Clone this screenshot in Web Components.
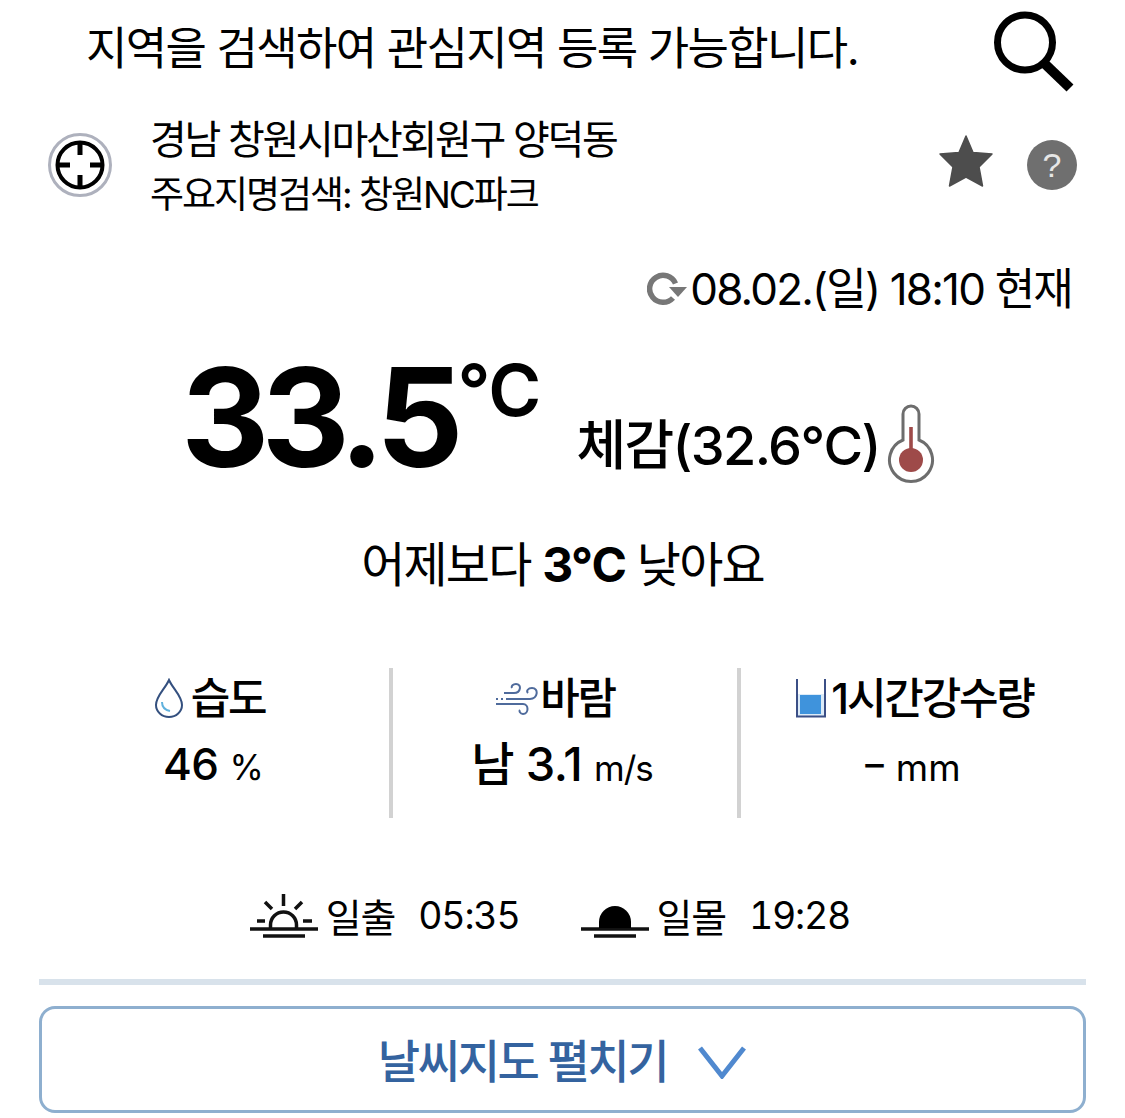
<!DOCTYPE html>
<html lang="ko">
<head>
<meta charset="utf-8">
<title>날씨</title>
<style>
  html, body { margin: 0; padding: 0; background: #fff; }
  body { font-family: Inter, "Noto Sans CJK KR", "Noto Sans", sans-serif; color: #000; width: 1125px; height: 1118px; overflow: hidden; }
</style>
</head>
<body>
<search-bar>지역을 검색하여 관심지역 등록 가능합니다.</search-bar>
<location-row></location-row>
<current-weather></current-weather>
<stat-row></stat-row>
<sun-times></sun-times>
<map-toggle>날씨지도 펼치기</map-toggle>

<script>
// search bar on top
class SearchBar extends HTMLElement {
    constructor() {
        super();
        this.attachShadow({ mode: 'open' });
        this.shadowRoot.innerHTML = `
            <style>
                :host { display: flex; align-items: center; justify-content: space-between; height: 100px; padding: 0 51px 0 86px; }
                .label { font-size: 45px; letter-spacing: -1.6px; line-height: 1; position: relative; top: -2px; }
                svg { width: 84px; height: 84px; display: block; }
            </style>
            <span class="label"><slot></slot></span>
            <svg viewBox="0 0 84 84" fill="none" stroke="#000">
                <circle cx="35" cy="34.5" r="27.5" stroke-width="7"/>
                <path d="M55 56 L80 80" stroke-width="10"/>
            </svg>
        `;
    }
}

class LocationRow extends HTMLElement {
    constructor() {
        super();
        this.attachShadow({ mode: 'open' });
        this.shadowRoot.innerHTML = `
            <style>
                :host { display: flex; align-items: center; height: 130px; padding: 0 48px; }
                .gps { width: 64px; height: 64px; flex: none; }
                .names { margin-left: 38px; padding-top: 4px; flex: 1; display: flex; flex-direction: column; gap: 11px; font-size: 40px; letter-spacing: -2.3px; line-height: 44px; }
                .sub { font-size: 37px; letter-spacing: -2.05px; }
                .star { width: 56px; height: 56px; margin-bottom: 8px; }
                .help { width: 50px; height: 50px; border-radius: 50%; background: #6f6f6f; color: #e6e6e6; margin-left: 33px; display: flex; align-items: center; justify-content: center; font: 34px "Liberation Sans", sans-serif; }
            </style>
            <svg class="gps" viewBox="0 0 64 64" fill="none">
                <circle cx="32" cy="32" r="30.5" stroke="#aeb1bd" stroke-width="3"/>
                <circle cx="32" cy="32" r="22.5" stroke="#000" stroke-width="4"/>
                <path d="M32 9V22M32 42V55M9 32H22M42 32H55" stroke="#000" stroke-width="5"/>
            </svg>
            <div class="names">
                <div>경남 창원시마산회원구 양덕동</div>
                <div class="sub">주요지명검색: 창원NC파크</div>
            </div>
            <svg class="star" viewBox="0 0 56 56"><path fill="#4d4d4d" stroke="#4d4d4d" stroke-width="1.5" stroke-linejoin="round" d="M28 3 L35 19.5 L54 21 L41 34 L44.5 53 L28 44 L11.5 53 L15 34 L2 21 L21 19.5Z"/></svg>
            <div class="help">?</div>
        `;
    }
}

class CurrentWeather extends HTMLElement {
    constructor() {
        super();
        this.attachShadow({ mode: 'open' });
        this.shadowRoot.innerHTML = `
            <style>
                :host { display: block; }
                .time { display: flex; justify-content: flex-end; align-items: center; padding: 33px 53px 0 0; height: 52px; font-size: 44px; letter-spacing: -1.82px; line-height: 52px; }
                .time svg { width: 40px; height: 34px; margin-right: 3px; }
                .temp { display: flex; align-items: flex-start; height: 150px; margin-top: 17px; padding-left: 181px; }
                .big { font-size: 137px; font-weight: 700; letter-spacing: -8px; line-height: 150px; margin-top: 10px; }
                .unit { font-size: 72px; font-weight: 600; line-height: 70px; letter-spacing: -1px; margin: 23px 0 0 2px; }
                .feel { font-size: 54px; font-weight: 500; letter-spacing: -1.6px; line-height: 60px; margin: 84px 0 0 36px; }
                .therm { width: 48px; height: 80px; margin: 72px 0 0 7px; flex: none; }
                .diff { text-align: center; font-size: 48px; letter-spacing: -1.8px; line-height: 56px; margin-top: 55px; }
                b { font-weight: 700; }
            </style>
            <div class="time">
                <svg viewBox="0 0 40 34" fill="none">
                    <path d="M28.5 11.5 A13.5 13.5 0 1 0 26 26" stroke="#777" stroke-width="5.5"/>
                    <path d="M22 15 H40 L31 25Z" fill="#777"/>
                </svg>
                <span>08.02.(일) 18:10 현재</span>
            </div>
            <div class="temp">
                <span class="big">33.5</span>
                <span class="unit">°C</span>
                <span class="feel">체감(32.6°C)</span>
                <svg class="therm" viewBox="0 0 48 80" fill="none">
                    <path d="M16 36 V10 A8 8 0 0 1 32 10 V36 A21.5 21.5 0 1 1 16 36Z" stroke="#6d6d6d" stroke-width="3"/>
                    <path d="M22.2 23H25.8V50H22.2Z" fill="#9e4a49"/>
                    <circle cx="24" cy="56" r="12" fill="#9e4a49"/>
                </svg>
            </div>
            <div class="diff">어제보다 <b>3°C</b> 낮아요</div>
        `;
    }
}

class StatItem extends HTMLElement {
    constructor() {
        super();
        this.attachShadow({ mode: 'open' });
        this.shadowRoot.innerHTML = `
            <style>
                :host { display: flex; flex-direction: column; align-items: center; height: 150px; box-sizing: border-box; padding-top: 2px; }
                :host(:not(:first-of-type)) { border-left: 4px solid #d2d2d2; }
                .head { display: flex; align-items: center; font-size: 43px; font-weight: 500; letter-spacing: -2.2px; line-height: 56px; gap: var(--head-gap, 4px); padding-right: var(--head-pad, 0); padding-left: var(--head-left, 0); }
                .val { font-size: var(--val-size, 46px); font-weight: 500; letter-spacing: -0.6px; line-height: 56px; margin-top: 10px; padding-right: var(--val-pad, 0); }
                ::slotted(svg) { display: block; flex: none; }
                ::slotted(small) { font-size: 35px; font-weight: 400; letter-spacing: -1px; }
            </style>
            <div class="head"><slot name="icon"></slot><slot name="title"></slot></div>
            <div class="val"><slot></slot></div>
        `;
    }
}

class StatRow extends HTMLElement {
    constructor() {
        super();
        this.attachShadow({ mode: 'open' });
        this.shadowRoot.innerHTML = `
            <style>
                :host { display: grid; grid-template-columns: 349px 348px 1fr; margin: 75px 0 0 40px; width: 1045px; }
            </style>
            <stat-item style="--head-pad:10px;--head-gap:7px;--val-pad:3px;--val-size:44px">
                <svg slot="icon" width="30" height="40" viewBox="0 0 30 40" fill="none">
                    <path d="M15 2 C11 11 2 18 2 27 A13 12 0 0 0 28 27 C28 18 19 11 15 2Z" stroke="#34507f" stroke-width="2"/>
                    <path d="M8 24 C8 29 11 32 16 33" stroke="#5fb1dd" stroke-width="2"/>
                </svg>
                <span slot="title">습도</span>
                46 <small>%</small>
            </stat-item>
            <stat-item style="--head-pad:20px;--head-gap:1px;--val-pad:6px;--val-size:47px">
                <svg slot="icon" width="44" height="40" viewBox="0 0 44 40" fill="none" stroke="#4f6b9c" stroke-width="2">
                    <path d="M9 15 H19 C26 15 27 6 21 6 C18 6 16 8 17 10"/>
                    <path d="M1 21 H3 M6 21 H8"/>
                    <path d="M11 21 H35 C43 21 44 10 37 10 C33 10 31 13 33 15"/>
                    <path d="M1 26 H28 C34 26 34 36 28 36 C25 36 24 33 25 32"/>
                </svg>
                <span slot="title">바람</span>
                남 3.1 <small>m/s</small>
            </stat-item>
            <stat-item style="--head-left:4px;--head-gap:5px">
                <svg slot="icon" width="30" height="40" viewBox="0 0 30 40">
                    <path d="M1 1 V38.5 H29 V1" fill="#dcebf8" stroke="#3b4f86" stroke-width="2"/>
                    <path d="M2 0 H28 V16 H2Z" fill="#fff"/>
                    <path d="M4 17 H25 V36 H4Z" fill="#3f93dc"/>
                </svg>
                <span slot="title">1시간강수량</span>
                <span style="font-size:37px;font-weight:400;letter-spacing:0"><span style="font-weight:500;margin-right:12px;position:relative;top:-4px">–</span>mm</span>
            </stat-item>
        `;
    }
}

class SunTimes extends HTMLElement {
    constructor() {
        super();
        this.attachShadow({ mode: 'open' });
        this.shadowRoot.innerHTML = `
            <style>
                :host { display: flex; justify-content: center; align-items: center; gap: 60px; height: 60px; margin-top: 67px; padding-right: 26px; font-size: 39px; letter-spacing: -1.2px; font-variant-numeric: tabular-nums; }
                .item { display: flex; align-items: center; gap: 7px; }
                .t { margin-left: 16px; font-size: 37.5px; }
                svg { width: 70px; height: 50px; display: block; }
            </style>
            <div class="item">
                <svg viewBox="0 0 70 50" fill="none" stroke="#111" stroke-width="3.5">
                    <path d="M1 39 H69"/>
                    <path d="M14 46 H56"/>
                    <path d="M21.5 38 V35 A13 13 0 0 1 47.5 35 V38"/>
                    <path d="M34.5 4 V16 M16 12 L23 19 M53 12 L46 19 M8 31 H16 M54 31 H63"/>
                </svg>
                <span>일출</span><span class="t">05:35</span>
            </div>
            <div class="item">
                <svg viewBox="0 0 70 50" fill="none" stroke="#111" stroke-width="3.5">
                    <path d="M1 39 H69"/>
                    <path d="M14 46 H56"/>
                    <path d="M19 38 V32 A16 16 0 0 1 51 32 V38Z" fill="#000" stroke="none"/>
                </svg>
                <span>일몰</span><span class="t">19:28</span>
            </div>
        `;
    }
}

class MapToggle extends HTMLElement {
    constructor() {
        super();
        this.attachShadow({ mode: 'open' });
        this.shadowRoot.innerHTML = `
            <style>
                :host { display: block; margin: 13px 39px 0; padding-top: 21px; }
                .rule { height: 6px; background: #d8e2eb; margin-bottom: 21px; }
                .btn { height: 107px; box-sizing: border-box; border: 3px solid #8eafcf; border-radius: 16px; display: flex; align-items: center; justify-content: center; gap: 30px; color: #34639f; font-size: 46px; font-weight: 500; letter-spacing: -2.4px; }
                .txt { margin-bottom: 4px; }
                svg { width: 50px; height: 34px; margin-top: 4px; }
            </style>
            <div class="rule"></div>
            <div class="btn">
                <span class="txt"><slot></slot></span>
                <svg viewBox="0 0 50 34" fill="none"><path d="M3 3 L25 31 L47 3" stroke="#5089cf" stroke-width="5"/></svg>
            </div>
        `;
    }
}

customElements.define('search-bar', SearchBar);
customElements.define('location-row', LocationRow);
customElements.define('current-weather', CurrentWeather);
customElements.define('stat-item', StatItem);
customElements.define('stat-row', StatRow);
customElements.define('sun-times', SunTimes);
customElements.define('map-toggle', MapToggle);
</script>
</body>
</html>
